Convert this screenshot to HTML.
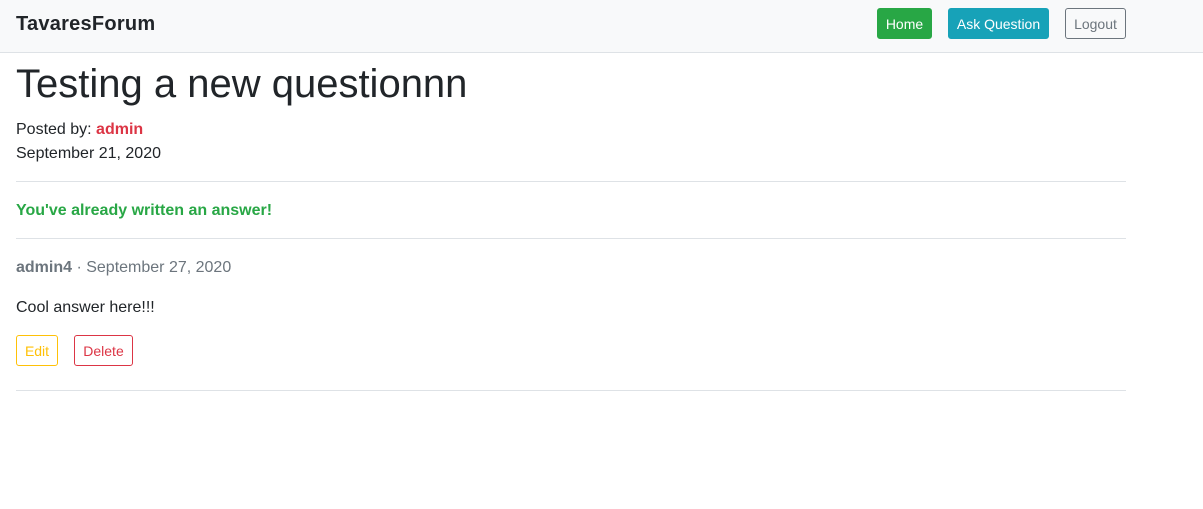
<!DOCTYPE html>
<html><head><style>
*{box-sizing:border-box;margin:0;padding:0}
body{font-family:"Liberation Sans",sans-serif;color:#212529;background:#fff;width:1203px;height:509px;position:relative;font-size:16px}
.nav{position:absolute;left:0;top:0;width:1203px;height:53px;background:#f8f9fa;border-bottom:1px solid #dee2e6}
.brand{position:absolute;left:16px;top:13px;font-size:20px;font-weight:bold;letter-spacing:0.25px}
.btn{position:absolute;height:31px;font-size:14px;line-height:31px;text-align:center;border-radius:3px;border:1px solid}
.a{position:absolute;left:16px;white-space:nowrap}
.hr{position:absolute;left:16px;width:1110px;height:1px;background:#dee2e6}
</style></head><body>
<div class="nav">
<div class="brand">TavaresForum</div>
<div class="btn" style="left:877px;top:8px;width:55px;background:#28a745;border-color:#28a745;color:#fff">Home</div>
<div class="btn" style="left:948px;top:8px;width:101px;background:#17a2b8;border-color:#17a2b8;color:#fff">Ask Question</div>
<div class="btn" style="left:1065px;top:8px;width:61px;border-color:#6c757d;color:#6c757d">Logout</div>
</div>
<div class="a" style="top:62px;font-size:40px;">Testing a new questionnn</div>
<div class="a" style="top:121px">Posted by: <b style="color:#dc3545">admin</b></div>
<div class="a" style="top:145px">September 21, 2020</div>
<div class="hr" style="top:181px"></div>
<div class="a" style="top:202px;color:#28a745;font-weight:bold">You've already written an answer!</div>
<div class="hr" style="top:238px"></div>
<div class="a" style="top:259px;color:#6c757d"><b>admin4</b> · September 27, 2020</div>
<div class="a" style="top:299px">Cool answer here!!!</div>
<div class="btn" style="left:16px;top:335px;width:42px;border-color:#ffc107;color:#ffc107">Edit</div>
<div class="btn" style="left:74px;top:335px;width:59px;border-color:#dc3545;color:#dc3545">Delete</div>
<div class="hr" style="top:390px"></div>
</body></html>
